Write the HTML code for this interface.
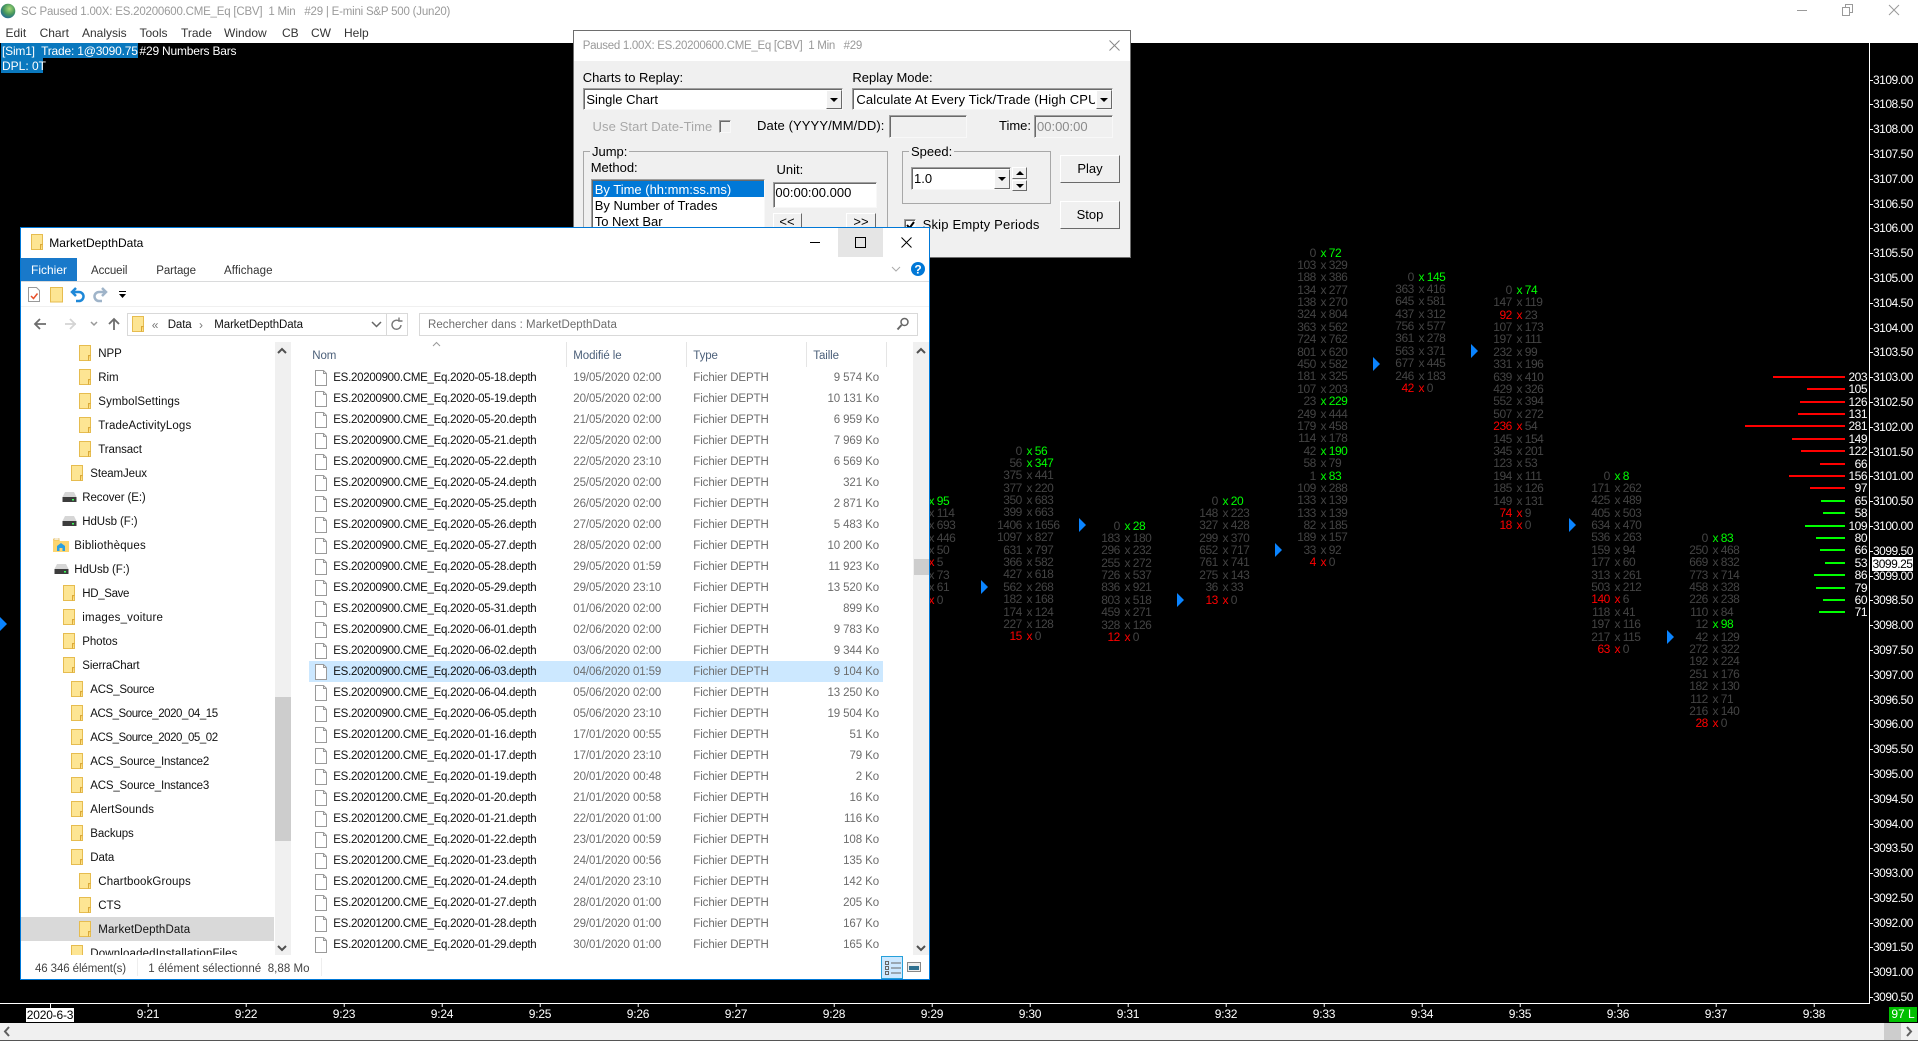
<!DOCTYPE html>
<html><head><meta charset="utf-8"><title>SC Paused</title>
<style>
html,body{margin:0;padding:0;background:#000}
body{width:1918px;height:1041px;position:relative;overflow:hidden;font:12px/16px "Liberation Sans",sans-serif;color:#000}
.a{position:absolute;white-space:nowrap}
svg{display:block}
.c{position:absolute;width:100px;color:#444;font-size:12px;letter-spacing:-.5px;margin-left:-.5px}
.c p{margin:0;height:12.4px;line-height:12.4px;display:flex}
.c a{width:40px;text-align:right}
.c a+i+a{text-align:left}
.c i{width:13px;text-align:center;font-style:normal;position:relative;left:1px}
.g i,.g a+i+a{color:#0f0}
.r i,.r a:first-child{color:#f00}
.tr{position:absolute;width:0;height:0;border-left:7px solid #0a84ff;border-top:7px solid transparent;border-bottom:7px solid transparent}
.px{position:absolute;left:1873px;top:67.6px;color:#fff;letter-spacing:-.5px}
.px div{height:24.8px;line-height:24.8px;position:relative}
.px div:before{content:"";position:absolute;left:-3px;top:12px;width:3px;height:1px;background:#fff}
.tm{position:absolute;top:1006px;color:#fff;transform:translateX(-50%);letter-spacing:-.2px}
.tm:before{content:"";position:absolute;left:50%;top:-3px;width:1px;height:4px;background:#fff}
.v{position:absolute;right:73px;height:2px}
.v span{position:absolute;right:-22px;top:-6px;line-height:14px;color:#fff;letter-spacing:-.5px}
.vr{background:#f00}.vg{background:#0f0}
.sk{position:absolute;box-sizing:border-box;background:#fff;border:1px solid;border-color:#a0a0a0 #f8f8f8 #f8f8f8 #a0a0a0;box-shadow:inset 1px 1px #6a6a6a}
.dis{background:#f0f0f0}
.bt{position:absolute;box-sizing:border-box;background:#f0f0f0;border:1px solid;border-color:#fff #6a6a6a #6a6a6a #fff;text-align:center;font-size:13px}
.ar{position:absolute;left:50%;top:50%;margin:-2px 0 0 -4px;width:0;height:0;border:4px solid transparent;border-top:4px solid #000;border-bottom:0}
.up{border-top:0;border-bottom:4px solid #000}
.d{font-size:13px;margin-top:1px}
.t{height:24px;line-height:26px;position:relative;white-space:nowrap;color:#111;font-size:11.5px;letter-spacing:-.1px}
.t svg{position:absolute;top:4px;width:12px;height:16px}
.l0{padding-left:77.3px}.l0 svg{left:58px}
.l1{padding-left:69.3px}.l1 svg{left:50px}
.l2{padding-left:61.3px}.l2 svg{left:42px}
.l3{padding-left:53.3px}.l3 svg{left:33px}
.t .dv{width:15px;height:12px;top:6px;left:41px}
.l3 .dv{left:33px}
.t .lb{width:16px;height:14px;top:5px;left:32px}
.f{position:relative;height:21px;line-height:21px;font-size:11.5px;width:574px}
.f svg{position:absolute;left:6px;top:1.5px;width:12px;height:16px}
.f a{position:absolute;top:0;color:#6d6d6d;letter-spacing:-.1px}
.f a:nth-of-type(1){left:24.3px;color:#111;letter-spacing:-.28px}
.f a:nth-of-type(2){left:264.3px}
.f a:nth-of-type(3){left:384.3px}
.f a:nth-of-type(4){right:4px}
.e{font-size:11.5px;letter-spacing:-.1px}
</style></head><body>

<svg width="0" height="0" style="position:absolute"><defs>
<symbol id="fo" viewBox="0 0 12 16"><rect x=".5" y=".5" width="11" height="15" fill="#fde593" stroke="#e6bc4f"/><path d="M9.5 15.5v-5h2" fill="#fbd266" stroke="#d9a93a"/></symbol>
<symbol id="fi" viewBox="0 0 12 16"><path d="M.5.5h8l3 3v12H.5z" fill="#fff" stroke="#9a9a9a"/><path d="M8.5.5v3h3" fill="none" stroke="#9a9a9a"/></symbol>
<symbol id="dv" viewBox="0 0 15 12"><path d="M3 1h9l2.500 5h-14z" fill="#d6d6d6"/><rect x=".5" y="6" width="14" height="5" fill="#3c3c3c"/><rect x="10" y="8" width="2" height="1.500" fill="#3dff5a"/></symbol>
<symbol id="lb" viewBox="0 0 16 14"><path d="M0 1h6l1 2h9v11H0z" fill="#fcd56f"/><rect x="1" y="0" width="5" height="2" fill="#fff" stroke="#d9a93f" stroke-width=".5"/><path d="M4 8l4-3 4 3v5h-2.500v-3h-3v3H4z" fill="#2a9fe0"/></symbol>
</defs></svg>

<!-- main title bar -->
<div class="a" style="left:0;top:0;width:1918px;height:43px;background:#fff"></div>
<svg class="a" style="left:0;top:3px" width="16" height="16"><defs><radialGradient id="gl" cx=".6" cy=".35" r=".75"><stop offset="0" stop-color="#a8d878"/><stop offset=".5" stop-color="#4a9a5c"/><stop offset="1" stop-color="#1a5ea0"/></radialGradient></defs><circle cx="8" cy="8" r="7.300" fill="url(#gl)"/></svg>
<div class="a" style="left:21px;top:4px;color:#9a9a9a;font-size:11.5px;letter-spacing:-.21px">SC Paused 1.00X: ES.20200600.CME_Eq [CBV] &nbsp;1 Min &nbsp; #29 | E-mini S&amp;P 500 (Jun20)</div>
<div class="a" style="left:5.500px;top:25px;color:#333">Edit</div>
<div class="a" style="left:39.600px;top:25px;color:#333">Chart</div>
<div class="a" style="left:82px;top:25px;color:#333">Analysis</div>
<div class="a" style="left:139.500px;top:25px;color:#333">Tools</div>
<div class="a" style="left:181px;top:25px;color:#333">Trade</div>
<div class="a" style="left:224px;top:25px;color:#333">Window</div>
<div class="a" style="left:282px;top:25px;color:#333">CB</div>
<div class="a" style="left:311px;top:25px;color:#333">CW</div>
<div class="a" style="left:344px;top:25px;color:#333">Help</div>
<svg class="a" style="left:1790px;top:0" width="120" height="22" fill="none" stroke="#9a9a9a"><path d="M7 10.500h10"/><path d="M52.500 7.500h7v8h-7zM55.500 7.500v-3h7v8h-3"/><path d="M99 5l10 10M109 5l-10 10"/></svg>

<!-- chart labels -->
<div class="a" style="left:1px;top:43px;width:137px;height:15px;background:#0a78be"></div>
<div class="a" style="left:1px;top:58px;width:42px;height:15px;background:#0a78be"></div>
<div class="a" style="left:2px;top:43px;color:#fff;letter-spacing:-.2px">[Sim1] &nbsp;Trade: 1@3090.75</div>
<div class="a" style="left:139.500px;top:43px;color:#fff;letter-spacing:-.2px">#29 Numbers Bars</div>
<div class="a" style="left:2px;top:58px;color:#fff">DPL: 0T</div>

<!-- axes -->
<div class="a" style="left:1869px;top:43px;width:1px;height:961px;background:#fff"></div>
<div class="a" style="left:0;top:1003px;width:1870px;height:1px;background:#fff"></div>
<div class="px">
<div>3109.00</div><div>3108.50</div><div>3108.00</div><div>3107.50</div><div>3107.00</div><div>3106.50</div><div>3106.00</div><div>3105.50</div><div>3105.00</div><div>3104.50</div><div>3104.00</div><div>3103.50</div><div>3103.00</div><div>3102.50</div><div>3102.00</div><div>3101.50</div><div>3101.00</div><div>3100.50</div><div>3100.00</div><div>3099.50</div><div>3099.00</div><div>3098.50</div><div>3098.00</div><div>3097.50</div><div>3097.00</div><div>3096.50</div><div>3096.00</div><div>3095.50</div><div>3095.00</div><div>3094.50</div><div>3094.00</div><div>3093.50</div><div>3093.00</div><div>3092.50</div><div>3092.00</div><div>3091.50</div><div>3091.00</div><div>3090.50</div>
</div>
<div class="a" style="left:1872px;top:557px;width:41px;height:14px;line-height:14px;background:#fff;color:#000;text-align:center;letter-spacing:-.5px">3099.25</div>

<div class="tm" style="left:148px">9:21</div><div class="tm" style="left:246px">9:22</div><div class="tm" style="left:344px">9:23</div><div class="tm" style="left:442px">9:24</div><div class="tm" style="left:540px">9:25</div><div class="tm" style="left:638px">9:26</div><div class="tm" style="left:736px">9:27</div><div class="tm" style="left:834px">9:28</div><div class="tm" style="left:932px">9:29</div><div class="tm" style="left:1030px">9:30</div><div class="tm" style="left:1128px">9:31</div><div class="tm" style="left:1226px">9:32</div><div class="tm" style="left:1324px">9:33</div><div class="tm" style="left:1422px">9:34</div><div class="tm" style="left:1520px">9:35</div><div class="tm" style="left:1618px">9:36</div><div class="tm" style="left:1716px">9:37</div><div class="tm" style="left:1814px">9:38</div>
<div class="a" style="left:50px;top:1003px;width:1px;height:5px;background:#fff"></div>
<div class="a" style="left:26px;top:1008px;width:48px;height:14px;line-height:14px;background:#fff;color:#000;text-align:center;letter-spacing:-.2px">2020-6-3</div>
<div class="a" style="left:1889px;top:1007px;width:28px;height:15px;line-height:15px;background:#00c000;color:#fff;text-align:center">97 L</div>

<!-- bottom scrollbar -->
<div class="a" style="left:0;top:1023px;width:1918px;height:17px;background:#f0f0f0"></div>
<div class="a" style="left:0;top:1040px;width:1918px;height:1px;background:#555"></div>
<div class="a" style="left:1884px;top:1023px;width:17px;height:17px;background:#cdcdcd"></div>
<svg class="a" style="left:0;top:1023px" width="1918" height="17" fill="none" stroke="#606060" stroke-width="2"><path d="M9 4l-4 4.500 4 4.500M1907 4l4 4.500-4 4.500"/></svg>

<!-- blue triangles -->
<div class="tr" style="left:0;top:617px"></div>
<div class="tr" style="left:981px;top:580px"></div>
<div class="tr" style="left:1079px;top:518px"></div>
<div class="tr" style="left:1177px;top:593px"></div>
<div class="tr" style="left:1275px;top:543px"></div>
<div class="tr" style="left:1373px;top:357px"></div>
<div class="tr" style="left:1471px;top:344px"></div>
<div class="tr" style="left:1569px;top:518px"></div>
<div class="tr" style="left:1667px;top:630px"></div>

<!-- footprint columns -->
<div class="c" style="left:884.300px;top:494.500px"><p class="g"><a></a><i>x</i><a>95</a></p><p><a></a><i>x</i><a>114</a></p><p><a></a><i>x</i><a>693</a></p><p><a></a><i>x</i><a>446</a></p><p><a></a><i>x</i><a>50</a></p><p class="r"><a></a><i>x</i><a>5</a></p><p><a></a><i>x</i><a>73</a></p><p><a></a><i>x</i><a>61</a></p><p class="r"><a></a><i>x</i><a>0</a></p></div>

<div class="c" style="left:982.300px;top:444.500px"><p class="g"><a>0</a><i>x</i><a>56</a></p><p class="g"><a>56</a><i>x</i><a>347</a></p><p><a>375</a><i>x</i><a>441</a></p><p><a>377</a><i>x</i><a>220</a></p><p><a>350</a><i>x</i><a>683</a></p><p><a>399</a><i>x</i><a>663</a></p><p><a>1406</a><i>x</i><a>1656</a></p><p><a>1097</a><i>x</i><a>827</a></p><p><a>631</a><i>x</i><a>797</a></p><p><a>366</a><i>x</i><a>582</a></p><p><a>427</a><i>x</i><a>618</a></p><p><a>562</a><i>x</i><a>268</a></p><p><a>182</a><i>x</i><a>168</a></p><p><a>174</a><i>x</i><a>124</a></p><p><a>227</a><i>x</i><a>128</a></p><p class="r"><a>15</a><i>x</i><a>0</a></p></div>

<div class="c" style="left:1080.300px;top:519.500px"><p class="g"><a>0</a><i>x</i><a>28</a></p><p><a>183</a><i>x</i><a>180</a></p><p><a>296</a><i>x</i><a>232</a></p><p><a>255</a><i>x</i><a>272</a></p><p><a>726</a><i>x</i><a>537</a></p><p><a>836</a><i>x</i><a>921</a></p><p><a>803</a><i>x</i><a>518</a></p><p><a>459</a><i>x</i><a>271</a></p><p><a>328</a><i>x</i><a>126</a></p><p class="r"><a>12</a><i>x</i><a>0</a></p></div>

<div class="c" style="left:1178.300px;top:494.500px"><p class="g"><a>0</a><i>x</i><a>20</a></p><p><a>148</a><i>x</i><a>223</a></p><p><a>327</a><i>x</i><a>428</a></p><p><a>299</a><i>x</i><a>370</a></p><p><a>652</a><i>x</i><a>717</a></p><p><a>761</a><i>x</i><a>741</a></p><p><a>275</a><i>x</i><a>143</a></p><p><a>36</a><i>x</i><a>33</a></p><p class="r"><a>13</a><i>x</i><a>0</a></p></div>

<div class="c" style="left:1276.300px;top:246.500px"><p class="g"><a>0</a><i>x</i><a>72</a></p><p><a>103</a><i>x</i><a>329</a></p><p><a>188</a><i>x</i><a>386</a></p><p><a>134</a><i>x</i><a>277</a></p><p><a>138</a><i>x</i><a>270</a></p><p><a>324</a><i>x</i><a>804</a></p><p><a>363</a><i>x</i><a>562</a></p><p><a>724</a><i>x</i><a>762</a></p><p><a>801</a><i>x</i><a>620</a></p><p><a>450</a><i>x</i><a>582</a></p><p><a>181</a><i>x</i><a>325</a></p><p><a>107</a><i>x</i><a>203</a></p><p class="g"><a>23</a><i>x</i><a>229</a></p><p><a>249</a><i>x</i><a>444</a></p><p><a>179</a><i>x</i><a>458</a></p><p><a>114</a><i>x</i><a>178</a></p><p class="g"><a>42</a><i>x</i><a>190</a></p><p><a>58</a><i>x</i><a>79</a></p><p class="g"><a>1</a><i>x</i><a>83</a></p><p><a>109</a><i>x</i><a>288</a></p><p><a>133</a><i>x</i><a>139</a></p><p><a>133</a><i>x</i><a>139</a></p><p><a>82</a><i>x</i><a>185</a></p><p><a>189</a><i>x</i><a>157</a></p><p><a>33</a><i>x</i><a>92</a></p><p class="r"><a>4</a><i>x</i><a>0</a></p></div>

<div class="c" style="left:1374.300px;top:270.500px"><p class="g"><a>0</a><i>x</i><a>145</a></p><p><a>363</a><i>x</i><a>416</a></p><p><a>645</a><i>x</i><a>581</a></p><p><a>437</a><i>x</i><a>312</a></p><p><a>756</a><i>x</i><a>577</a></p><p><a>361</a><i>x</i><a>278</a></p><p><a>563</a><i>x</i><a>371</a></p><p><a>677</a><i>x</i><a>445</a></p><p><a>246</a><i>x</i><a>183</a></p><p class="r"><a>42</a><i>x</i><a>0</a></p></div>

<div class="c" style="left:1472.300px;top:283.900px"><p class="g"><a>0</a><i>x</i><a>74</a></p><p><a>147</a><i>x</i><a>119</a></p><p class="r"><a>92</a><i>x</i><a>23</a></p><p><a>107</a><i>x</i><a>173</a></p><p><a>197</a><i>x</i><a>111</a></p><p><a>232</a><i>x</i><a>99</a></p><p><a>331</a><i>x</i><a>196</a></p><p><a>639</a><i>x</i><a>410</a></p><p><a>429</a><i>x</i><a>326</a></p><p><a>552</a><i>x</i><a>394</a></p><p><a>507</a><i>x</i><a>272</a></p><p class="r"><a>236</a><i>x</i><a>54</a></p><p><a>145</a><i>x</i><a>154</a></p><p><a>345</a><i>x</i><a>201</a></p><p><a>123</a><i>x</i><a>53</a></p><p><a>194</a><i>x</i><a>111</a></p><p><a>185</a><i>x</i><a>126</a></p><p><a>149</a><i>x</i><a>131</a></p><p class="r"><a>74</a><i>x</i><a>9</a></p><p class="r"><a>18</a><i>x</i><a>0</a></p></div>

<div class="c" style="left:1570.300px;top:469.500px"><p class="g"><a>0</a><i>x</i><a>8</a></p><p><a>171</a><i>x</i><a>262</a></p><p><a>425</a><i>x</i><a>489</a></p><p><a>405</a><i>x</i><a>503</a></p><p><a>634</a><i>x</i><a>470</a></p><p><a>536</a><i>x</i><a>263</a></p><p><a>159</a><i>x</i><a>94</a></p><p><a>177</a><i>x</i><a>60</a></p><p><a>313</a><i>x</i><a>261</a></p><p><a>503</a><i>x</i><a>212</a></p><p class="r"><a>140</a><i>x</i><a>6</a></p><p><a>118</a><i>x</i><a>41</a></p><p><a>197</a><i>x</i><a>116</a></p><p><a>217</a><i>x</i><a>115</a></p><p class="r"><a>63</a><i>x</i><a>0</a></p></div>

<div class="c" style="left:1668.300px;top:531.500px"><p class="g"><a>0</a><i>x</i><a>83</a></p><p><a>250</a><i>x</i><a>468</a></p><p><a>669</a><i>x</i><a>832</a></p><p><a>773</a><i>x</i><a>714</a></p><p><a>458</a><i>x</i><a>328</a></p><p><a>226</a><i>x</i><a>238</a></p><p><a>110</a><i>x</i><a>84</a></p><p class="g"><a>12</a><i>x</i><a>98</a></p><p><a>42</a><i>x</i><a>129</a></p><p><a>272</a><i>x</i><a>322</a></p><p><a>192</a><i>x</i><a>224</a></p><p><a>251</a><i>x</i><a>176</a></p><p><a>182</a><i>x</i><a>130</a></p><p><a>112</a><i>x</i><a>71</a></p><p><a>216</a><i>x</i><a>140</a></p><p class="r"><a>28</a><i>x</i><a>0</a></p></div>

<!-- volume bars -->
<div class="v vr" style="top:376px;width:72px"><span>203</span></div>
<div class="v vr" style="top:388px;width:38px"><span>105</span></div>
<div class="v vr" style="top:401px;width:45px"><span>126</span></div>
<div class="v vr" style="top:413px;width:47px"><span>131</span></div>
<div class="v vr" style="top:425px;width:100px"><span>281</span></div>
<div class="v vr" style="top:438px;width:53px"><span>149</span></div>
<div class="v vr" style="top:450px;width:44px"><span>122</span></div>
<div class="v vr" style="top:463px;width:25px"><span>66</span></div>
<div class="v vr" style="top:475px;width:56px"><span>156</span></div>
<div class="v vr" style="top:487px;width:35px"><span>97</span></div>
<div class="v vg" style="top:500px;width:24px"><span>65</span></div>
<div class="v vg" style="top:512px;width:22px"><span>58</span></div>
<div class="v vg" style="top:525px;width:40px"><span>109</span></div>
<div class="v vg" style="top:537px;width:29px"><span>80</span></div>
<div class="v vg" style="top:549px;width:25px"><span>66</span></div>
<div class="v vg" style="top:562px;width:20px"><span>53</span></div>
<div class="v vg" style="top:574px;width:31px"><span>86</span></div>
<div class="v vg" style="top:587px;width:29px"><span>79</span></div>
<div class="v vg" style="top:599px;width:22px"><span>60</span></div>
<div class="v vg" style="top:611px;width:26px"><span>71</span></div>

<!-- replay dialog -->
<div class="a" style="left:573px;top:30px;width:556px;height:226px;background:#f0f0f0;border:1px solid #6e6e6e"></div>
<div class="a" style="left:574px;top:31px;width:556px;height:30px;background:#fff"></div>
<div class="a" style="left:582.700px;top:38px;color:#999;font-size:11.5px;letter-spacing:-.29px">Paused 1.00X: ES.20200600.CME_Eq [CBV] &nbsp;1 Min &nbsp; #29</div>
<svg class="a" style="left:1108px;top:39px" width="13" height="13" fill="none" stroke="#888"><path d="M1.500 1.500l10 10M11.500 1.500l-10 10"/></svg>
<div class="a d" style="left:582.700px;top:69px">Charts to Replay:</div>
<div class="a d" style="left:852.400px;top:69px">Replay Mode:</div>
<div class="sk" style="left:582.700px;top:88px;width:260px;height:22px"></div>
<div class="a d" style="left:586.400px;top:91px">Single Chart</div>
<div class="bt" style="left:825.500px;top:90px;width:16px;height:19px"><div class="ar"></div></div>
<div class="sk" style="left:852.400px;top:88px;width:260.300px;height:22px"></div>
<div class="a d" style="left:856.400px;top:91px;width:239px;overflow:hidden;letter-spacing:.14px">Calculate At Every Tick/Trade (High CPU</div>
<div class="bt" style="left:1096px;top:90px;width:16px;height:19px"><div class="ar"></div></div>
<div class="a d" style="left:592.500px;top:118px;color:#a8a8a8;letter-spacing:.1px">Use Start Date-Time</div>
<div class="sk dis" style="left:719px;top:120px;width:12px;height:13px"></div>
<div class="a d" style="left:757px;top:117px;letter-spacing:.1px">Date (YYYY/MM/DD):</div>
<div class="sk dis" style="left:888.800px;top:115px;width:78.500px;height:23px"></div>
<div class="a d" style="left:999px;top:117px">Time:</div>
<div class="sk dis" style="left:1034px;top:115px;width:78.700px;height:23px"></div>
<div class="a d" style="left:1037px;top:118px;color:#8a8a8a">00:00:00</div>

<div class="a" style="left:582.700px;top:151px;width:305px;height:90px;border:1px solid #a8a8a8;box-sizing:border-box"></div>
<div class="a d" style="left:590px;top:143px;background:#f0f0f0;padding:0 2px">Jump:</div>
<div class="a d" style="left:590.700px;top:159px">Method:</div>
<div class="a d" style="left:776.500px;top:161px">Unit:</div>
<div class="sk" style="left:590.700px;top:179px;width:174px;height:60px"></div>
<div class="a" style="left:592.500px;top:181px;width:171px;height:16px;background:#0078d7"></div>
<div class="a d" style="left:594.700px;top:181px;color:#fff">By Time (hh:mm:ss.ms)</div>
<div class="a d" style="left:594.700px;top:197px">By Number of Trades</div>
<div class="a d" style="left:594.700px;top:213px">To Next Bar</div>
<div class="sk" style="left:772.500px;top:182px;width:104.500px;height:26px"></div>
<div class="a d" style="left:775.400px;top:184px">00:00:00.000</div>
<div class="bt" style="left:772.500px;top:213px;width:29px;height:24px">&lt;&lt;</div>
<div class="bt" style="left:846px;top:213px;width:30px;height:24px">&gt;&gt;</div>

<div class="a" style="left:902px;top:151px;width:148.500px;height:53px;border:1px solid #a8a8a8;box-sizing:border-box"></div>
<div class="a d" style="left:909px;top:143px;background:#f0f0f0;padding:0 2px">Speed:</div>
<div class="sk" style="left:910.600px;top:167px;width:100px;height:23px"></div>
<div class="a d" style="left:914px;top:170px">1.0</div>
<div class="bt" style="left:993.500px;top:169px;width:16px;height:20px"><div class="ar"></div></div>
<div class="bt" style="left:1012px;top:167px;width:15px;height:12px"><div class="ar up"></div></div>
<div class="bt" style="left:1012px;top:180px;width:15px;height:11px"><div class="ar"></div></div>
<div class="bt" style="left:1060px;top:155px;width:60px;height:28px;line-height:25px">Play</div>
<div class="bt" style="left:1060px;top:201px;width:60px;height:28px;line-height:25px">Stop</div>
<div class="sk" style="left:904.400px;top:219px;width:12px;height:13px"></div>
<svg class="a" style="left:905px;top:220px" width="11" height="11" fill="none" stroke="#000" stroke-width="2"><path d="M2 5l2.500 3L9 2"/></svg>
<div class="a d" style="left:922.600px;top:216px;letter-spacing:.2px">Skip Empty Periods</div>

<!-- explorer window -->
<div class="a" style="left:20px;top:227px;width:908px;height:751px;background:#fff;border:1px solid #0078d7"></div>
<svg class="a" style="left:31px;top:234px;width:12px;height:16px"><use href="#fo"/></svg>
<div class="a" style="left:49.300px;top:235px">MarketDepthData</div>
<div class="a" style="left:838px;top:228px;width:45px;height:29px;background:#e5e5e5"></div>
<svg class="a" style="left:800px;top:228px" width="125" height="30" fill="none" stroke="#000"><path d="M10 14.500h10"/><rect x="55.500" y="9.500" width="10" height="10"/><path d="M101.500 9.500l10 10M111.500 9.500l-10 10"/></svg>
<div class="a" style="left:21px;top:258px;width:56px;height:23px;line-height:24px;background:#1979ca;color:#fff;text-align:center">Fichier</div>
<div class="a e" style="left:91px;top:263px;color:#333">Accueil</div>
<div class="a e" style="left:156.300px;top:263px;color:#333">Partage</div>
<div class="a e" style="left:224px;top:263px;color:#333;letter-spacing:.1px">Affichage</div>
<div class="a" style="left:21px;top:281px;width:908px;height:1px;background:#dadbdc"></div>
<div class="a" style="left:21px;top:306px;width:908px;height:1px;background:#f0f0f0"></div>

<!-- nav boxes -->
<div class="a" style="left:127px;top:313px;width:279px;height:21px;border:1px solid #d9d9d9"></div>
<div class="a" style="left:386px;top:314px;width:1px;height:21px;background:#d9d9d9"></div>
<div class="a" style="left:419px;top:313px;width:497px;height:21px;border:1px solid #d9d9d9"></div>
<svg class="a" style="left:132px;top:316px;width:12px;height:16px"><use href="#fo"/></svg>
<div class="a" style="left:151.700px;top:317px;color:#777">«</div>
<div class="a e" style="left:167.700px;top:317px;color:#111">Data</div>
<div class="a" style="left:199px;top:317px;color:#777">›</div>
<div class="a e" style="left:214.300px;top:317px;color:#111">MarketDepthData</div>
<div class="a e" style="left:428px;top:317px;color:#6d6d6d;letter-spacing:.05px">Rechercher dans : MarketDepthData</div>

<!-- icons -->
<svg class="a" style="left:0;top:0" width="1918" height="1041" fill="none">
<path d="M28.500 287.500h8l3 3v11h-11z" fill="#fff" stroke="#999"/><path d="M31 296l2.500 2.500 4-5" stroke="#e8502a" stroke-width="1.500"/>
<rect x="50.500" y="287.500" width="12" height="14.500" fill="#fde593" stroke="#e6bc4f"/>
<path d="M76 288l-4 4 4 4M73 292h6a4.500 4.500 0 0 1 0 9h-3" stroke="#1e88d8" stroke-width="2.500"/>
<path d="M102 288l4 4-4 4M105 292h-6a4.500 4.500 0 0 0 0 9h3" stroke="#9fb4c9" stroke-width="2.500"/>
<path d="M119 291.500h7" stroke="#000"/><path d="M119 294h7l-3.500 4z" fill="#000"/>
<path d="M46 324H35M40 319l-5 5 5 5" stroke="#6d6d6d" stroke-width="1.800"/>
<path d="M76 324H65M70 319l5 5-5 5" stroke="#d4d4d4" stroke-width="1.800"/>
<path d="M91 322l3 3 3-3" stroke="#999" stroke-width="1.500"/>
<path d="M114 330v-11M109 324l5-5 5 5" stroke="#6d6d6d" stroke-width="1.800"/>
<path d="M372 322l4.500 4.500 4.500-4.500" stroke="#666" stroke-width="1.500"/>
<path d="M401 325a4.500 4.500 0 1 1-2-4M399 317.500v3.500h3.500" stroke="#777" stroke-width="1.400"/>
<circle cx="904.500" cy="322" r="3.500" stroke="#666" stroke-width="1.500"/><path d="M901.500 325l-4 4.500" stroke="#666" stroke-width="2"/>
<path d="M892 267l4 4 4-4" stroke="#aaa"/>
<circle cx="918" cy="269" r="7" fill="#0078d7"/>
<text x="918" y="273.500" fill="#fff" font-family="Liberation Sans" font-weight="bold" font-size="12" text-anchor="middle">?</text>
<path d="M433 346l3.500-3.500 3.500 3.500" stroke="#999"/>
<path d="M566.500 342v25M686.500 342v25M806.500 342v25M886.500 342v25" stroke="#e5e5e5"/>
</svg>

<!-- tree scrollbar -->
<div class="a" style="left:275px;top:342px;width:16px;height:613px;background:#f0f0f0"></div>
<div class="a" style="left:275px;top:697px;width:16px;height:144px;background:#cdcdcd"></div>
<!-- list scrollbar -->
<div class="a" style="left:913px;top:342px;width:16px;height:613px;background:#f0f0f0"></div>
<div class="a" style="left:914px;top:559px;width:15px;height:16px;background:#cdcdcd"></div>
<svg class="a" style="left:0;top:0" width="1918" height="1041" fill="none" stroke="#505050" stroke-width="2"><path d="M278 353l4-4 4 4M917 353l4-4 4 4M278 946l4 4 4-4M917 946l4 4 4-4"/></svg>

<!-- tree -->
<div class="a" style="left:21px;top:341.300px;width:253px;height:613.700px;overflow:hidden">
<div class="t l0"><svg><use href="#fo"/></svg>NPP</div>
<div class="t l0"><svg><use href="#fo"/></svg>Rim</div>
<div class="t l0" style="letter-spacing:.12px"><svg><use href="#fo"/></svg>SymbolSettings</div>
<div class="t l0" style="letter-spacing:.12px"><svg><use href="#fo"/></svg>TradeActivityLogs</div>
<div class="t l0"><svg><use href="#fo"/></svg>Transact</div>
<div class="t l1"><svg><use href="#fo"/></svg>SteamJeux</div>
<div class="t l2"><svg class="dv"><use href="#dv"/></svg>Recover (E:)</div>
<div class="t l2"><svg class="dv"><use href="#dv"/></svg>HdUsb (F:)</div>
<div class="t l3" style="letter-spacing:.2px"><svg class="lb"><use href="#lb"/></svg>Bibliothèques</div>
<div class="t l3"><svg class="dv"><use href="#dv"/></svg>HdUsb (F:)</div>
<div class="t l2" style="letter-spacing:-.35px"><svg><use href="#fo"/></svg>HD_Save</div>
<div class="t l2" style="letter-spacing:.2px"><svg><use href="#fo"/></svg>images_voiture</div>
<div class="t l2"><svg><use href="#fo"/></svg>Photos</div>
<div class="t l2" style="letter-spacing:-.15px"><svg><use href="#fo"/></svg>SierraChart</div>
<div class="t l1" style="letter-spacing:-.25px"><svg><use href="#fo"/></svg>ACS_Source</div>
<div class="t l1" style="letter-spacing:-.45px"><svg><use href="#fo"/></svg>ACS_Source_2020_04_15</div>
<div class="t l1" style="letter-spacing:-.45px"><svg><use href="#fo"/></svg>ACS_Source_2020_05_02</div>
<div class="t l1" style="letter-spacing:-.2px"><svg><use href="#fo"/></svg>ACS_Source_Instance2</div>
<div class="t l1" style="letter-spacing:-.2px"><svg><use href="#fo"/></svg>ACS_Source_Instance3</div>
<div class="t l1" style="letter-spacing:.1px"><svg><use href="#fo"/></svg>AlertSounds</div>
<div class="t l1"><svg><use href="#fo"/></svg>Backups</div>
<div class="t l1"><svg><use href="#fo"/></svg>Data</div>
<div class="t l0" style="letter-spacing:.12px"><svg><use href="#fo"/></svg>ChartbookGroups</div>
<div class="t l0"><svg><use href="#fo"/></svg>CTS</div>
<div class="t l0" style="background:#d9d9d9;letter-spacing:.12px"><svg><use href="#fo"/></svg>MarketDepthData</div>
<div class="t l1" style="letter-spacing:.15px"><svg><use href="#fo"/></svg>DownloadedInstallationFiles</div>
</div>

<!-- column headers -->
<div class="a e" style="left:312.300px;top:348px;color:#4c607a">Nom</div>
<div class="a e" style="left:573.300px;top:348px;color:#4c607a">Modifié le</div>
<div class="a e" style="left:693.300px;top:348px;color:#4c607a">Type</div>
<div class="a e" style="left:813.300px;top:348px;color:#4c607a">Taille</div>

<!-- files -->
<div class="a" style="left:309px;top:661px;width:574px;height:21px;background:#cce8ff"></div>
<div class="a" style="left:309px;top:368.200px;width:574px">
<div class="f"><svg><use href="#fi"/></svg><a>ES.20200900.CME_Eq.2020-05-18.depth</a><a>19/05/2020 02:00</a><a>Fichier DEPTH</a><a>9 574 Ko</a></div>
<div class="f"><svg><use href="#fi"/></svg><a>ES.20200900.CME_Eq.2020-05-19.depth</a><a>20/05/2020 02:00</a><a>Fichier DEPTH</a><a>10 131 Ko</a></div>
<div class="f"><svg><use href="#fi"/></svg><a>ES.20200900.CME_Eq.2020-05-20.depth</a><a>21/05/2020 02:00</a><a>Fichier DEPTH</a><a>6 959 Ko</a></div>
<div class="f"><svg><use href="#fi"/></svg><a>ES.20200900.CME_Eq.2020-05-21.depth</a><a>22/05/2020 02:00</a><a>Fichier DEPTH</a><a>7 969 Ko</a></div>
<div class="f"><svg><use href="#fi"/></svg><a>ES.20200900.CME_Eq.2020-05-22.depth</a><a>22/05/2020 23:10</a><a>Fichier DEPTH</a><a>6 569 Ko</a></div>
<div class="f"><svg><use href="#fi"/></svg><a>ES.20200900.CME_Eq.2020-05-24.depth</a><a>25/05/2020 02:00</a><a>Fichier DEPTH</a><a>321 Ko</a></div>
<div class="f"><svg><use href="#fi"/></svg><a>ES.20200900.CME_Eq.2020-05-25.depth</a><a>26/05/2020 02:00</a><a>Fichier DEPTH</a><a>2 871 Ko</a></div>
<div class="f"><svg><use href="#fi"/></svg><a>ES.20200900.CME_Eq.2020-05-26.depth</a><a>27/05/2020 02:00</a><a>Fichier DEPTH</a><a>5 483 Ko</a></div>
<div class="f"><svg><use href="#fi"/></svg><a>ES.20200900.CME_Eq.2020-05-27.depth</a><a>28/05/2020 02:00</a><a>Fichier DEPTH</a><a>10 200 Ko</a></div>
<div class="f"><svg><use href="#fi"/></svg><a>ES.20200900.CME_Eq.2020-05-28.depth</a><a>29/05/2020 01:59</a><a>Fichier DEPTH</a><a>11 923 Ko</a></div>
<div class="f"><svg><use href="#fi"/></svg><a>ES.20200900.CME_Eq.2020-05-29.depth</a><a>29/05/2020 23:10</a><a>Fichier DEPTH</a><a>13 520 Ko</a></div>
<div class="f"><svg><use href="#fi"/></svg><a>ES.20200900.CME_Eq.2020-05-31.depth</a><a>01/06/2020 02:00</a><a>Fichier DEPTH</a><a>899 Ko</a></div>
<div class="f"><svg><use href="#fi"/></svg><a>ES.20200900.CME_Eq.2020-06-01.depth</a><a>02/06/2020 02:00</a><a>Fichier DEPTH</a><a>9 783 Ko</a></div>
<div class="f"><svg><use href="#fi"/></svg><a>ES.20200900.CME_Eq.2020-06-02.depth</a><a>03/06/2020 02:00</a><a>Fichier DEPTH</a><a>9 344 Ko</a></div>
<div class="f"><svg><use href="#fi"/></svg><a>ES.20200900.CME_Eq.2020-06-03.depth</a><a>04/06/2020 01:59</a><a>Fichier DEPTH</a><a>9 104 Ko</a></div>
<div class="f"><svg><use href="#fi"/></svg><a>ES.20200900.CME_Eq.2020-06-04.depth</a><a>05/06/2020 02:00</a><a>Fichier DEPTH</a><a>13 250 Ko</a></div>
<div class="f"><svg><use href="#fi"/></svg><a>ES.20200900.CME_Eq.2020-06-05.depth</a><a>05/06/2020 23:10</a><a>Fichier DEPTH</a><a>19 504 Ko</a></div>
<div class="f"><svg><use href="#fi"/></svg><a>ES.20201200.CME_Eq.2020-01-16.depth</a><a>17/01/2020 00:55</a><a>Fichier DEPTH</a><a>51 Ko</a></div>
<div class="f"><svg><use href="#fi"/></svg><a>ES.20201200.CME_Eq.2020-01-17.depth</a><a>17/01/2020 23:10</a><a>Fichier DEPTH</a><a>79 Ko</a></div>
<div class="f"><svg><use href="#fi"/></svg><a>ES.20201200.CME_Eq.2020-01-19.depth</a><a>20/01/2020 00:48</a><a>Fichier DEPTH</a><a>2 Ko</a></div>
<div class="f"><svg><use href="#fi"/></svg><a>ES.20201200.CME_Eq.2020-01-20.depth</a><a>21/01/2020 00:58</a><a>Fichier DEPTH</a><a>16 Ko</a></div>
<div class="f"><svg><use href="#fi"/></svg><a>ES.20201200.CME_Eq.2020-01-21.depth</a><a>22/01/2020 01:00</a><a>Fichier DEPTH</a><a>116 Ko</a></div>
<div class="f"><svg><use href="#fi"/></svg><a>ES.20201200.CME_Eq.2020-01-22.depth</a><a>23/01/2020 00:59</a><a>Fichier DEPTH</a><a>108 Ko</a></div>
<div class="f"><svg><use href="#fi"/></svg><a>ES.20201200.CME_Eq.2020-01-23.depth</a><a>24/01/2020 00:56</a><a>Fichier DEPTH</a><a>135 Ko</a></div>
<div class="f"><svg><use href="#fi"/></svg><a>ES.20201200.CME_Eq.2020-01-24.depth</a><a>24/01/2020 23:10</a><a>Fichier DEPTH</a><a>142 Ko</a></div>
<div class="f"><svg><use href="#fi"/></svg><a>ES.20201200.CME_Eq.2020-01-27.depth</a><a>28/01/2020 01:00</a><a>Fichier DEPTH</a><a>205 Ko</a></div>
<div class="f"><svg><use href="#fi"/></svg><a>ES.20201200.CME_Eq.2020-01-28.depth</a><a>29/01/2020 01:00</a><a>Fichier DEPTH</a><a>167 Ko</a></div>
<div class="f"><svg><use href="#fi"/></svg><a>ES.20201200.CME_Eq.2020-01-29.depth</a><a>30/01/2020 01:00</a><a>Fichier DEPTH</a><a>165 Ko</a></div>
</div>

<!-- status bar -->
<div class="a e" style="left:35px;top:961px;color:#444">46 346 élément(s)</div>
<div class="a e" style="left:148.300px;top:961px;color:#444;letter-spacing:.05px">1 élément sélectionné &nbsp;8,88 Mo</div>
<div class="a" style="left:137px;top:958px;width:1px;height:18px;background:#eee"></div>
<div class="a" style="left:321px;top:958px;width:1px;height:18px;background:#eee"></div>
<div class="a" style="left:881px;top:956px;width:20px;height:21px;background:#cce8ff;border:1px solid #26a0da"></div>
<svg class="a" style="left:884px;top:960px" width="40" height="16" fill="none" stroke="#666"><path d="M1.500 1.500h3v3h-3zM1.500 6.500h3v3h-3zM1.500 11.500h3v3h-3zM7 3h10M7 8h10M7 13h10" stroke-dasharray="none"/><rect x="23.500" y="2.500" width="13" height="9" fill="#eee" stroke="#888"/><rect x="25" y="6" width="10" height="4" fill="#2d6f8f" stroke="none"/></svg>

</body></html>
